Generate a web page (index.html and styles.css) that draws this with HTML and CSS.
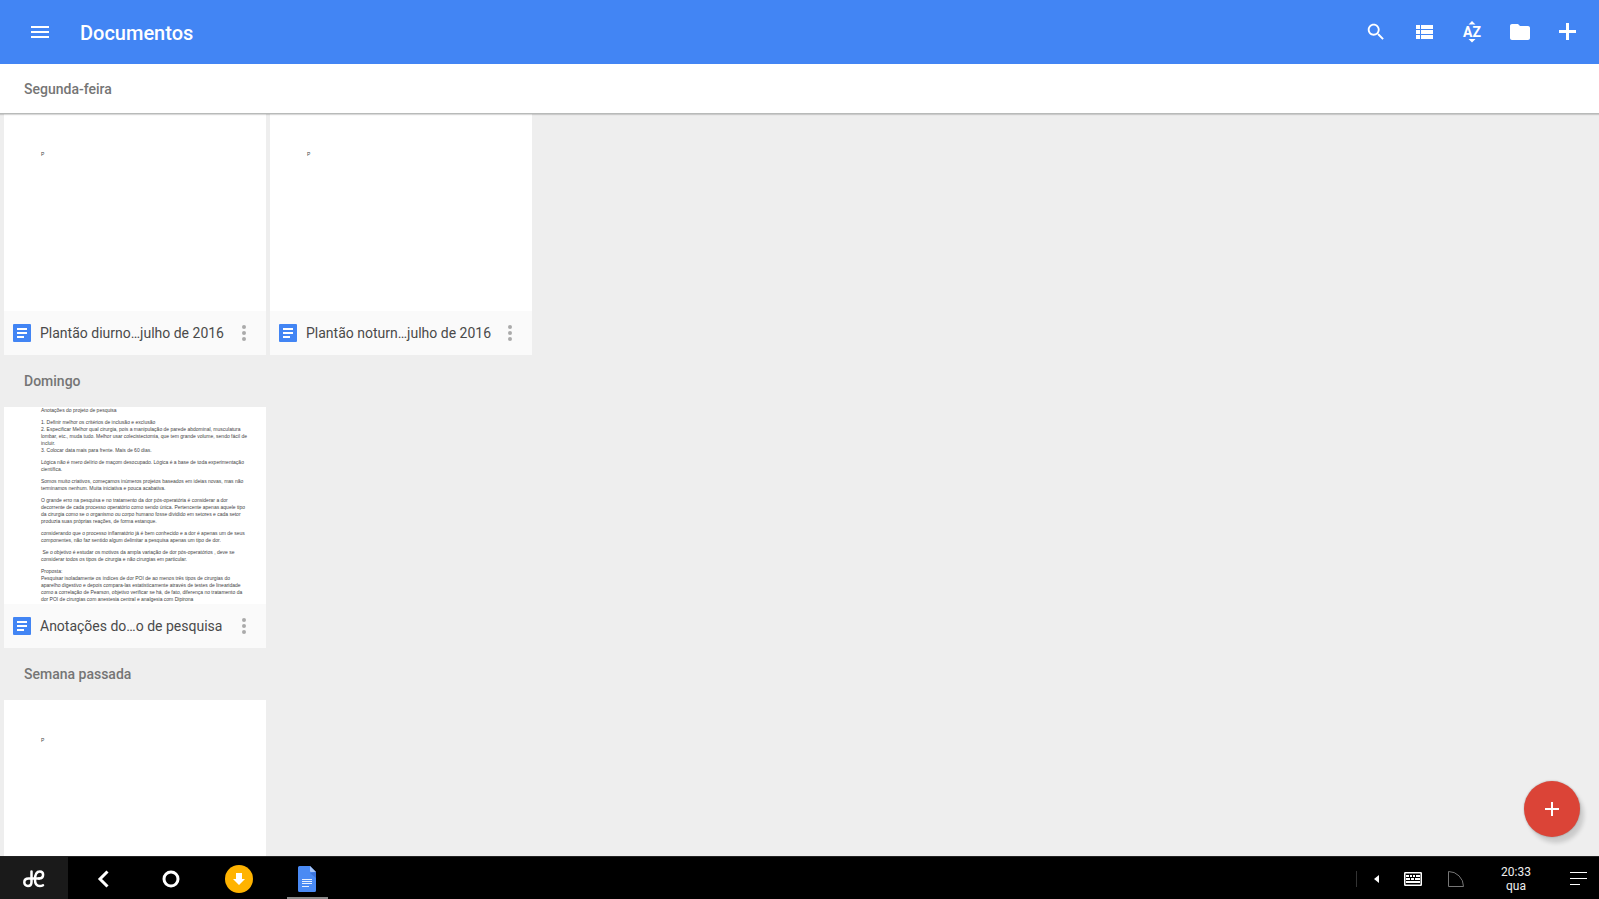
FILE: index.html
```html
<!DOCTYPE html>
<html lang="pt-BR">
<head>
    <meta charset="UTF-8">
    <title>Documentos</title>
    <meta name="viewport" content="width=device-width, initial-scale=1.0">
    <link rel="stylesheet" href="styles.css">
</head>
<body>

<svg class="sprite" aria-hidden="true">
    <symbol id="doc" viewBox="0 0 18 18">
        <rect width="18" height="18" rx="1" fill="#4285f4"/>
        <path d="M4 4h10v2H4zM4 8h10v2H4zM4 12h7v2H4z" fill="#fff"/>
    </symbol>
    <symbol id="more" viewBox="0 0 4 16">
        <circle cx="2" cy="2" r="2"/>
        <circle cx="2" cy="8" r="2"/>
        <circle cx="2" cy="14" r="2"/>
    </symbol>
</svg>

<div class="app">
    <header class="toolbar">
        <button class="icon-button" aria-label="Menu">
            <svg width="24" height="24" viewBox="0 0 24 24"><path d="M3 6h18v2H3zM3 11h18v2H3zM3 16h18v2H3z"/></svg>
        </button>
        <h1 class="toolbar-title">Documentos</h1>
        <button class="icon-button" aria-label="Pesquisar">
            <svg width="22" height="22" viewBox="0 0 24 24"><path d="M15.5 14h-.79l-.28-.27C15.41 12.59 16 11.11 16 9.5 16 5.91 13.09 3 9.5 3S3 5.91 3 9.5 5.91 16 9.5 16c1.61 0 3.09-.59 4.23-1.57l.27.28v.79l5 4.99L20.49 19l-4.99-5zm-6 0C7.01 14 5 11.99 5 9.5S7.01 5 9.5 5 14 7.01 14 9.5 11.99 14 9.5 14z"/></svg>
        </button>
        <button class="icon-button" aria-label="Exibir em lista">
            <svg width="24" height="24" viewBox="0 0 24 24"><path d="M4 5h4v4H4zM9 5h12v4H9zM4 10h4v4H4zM9 10h12v4H9zM4 15h4v4H4zM9 15h12v4H9z"/></svg>
        </button>
        <button class="icon-button" aria-label="Classificar">
            <svg width="24" height="24" viewBox="0 0 24 24">
                <path d="M12 1l3.500 3.500h-7zM8.500 19h7L12 22.500z"/>
                <text class="sort-letters" x="12" y="17" text-anchor="middle">AZ</text>
            </svg>
        </button>
        <button class="icon-button" aria-label="Abrir pasta">
            <svg width="24" height="24" viewBox="0 0 24 24"><path d="M10 4H4c-1.100 0-1.990.9-1.990 2L2 18c0 1.100.9 2 2 2h16c1.100 0 2-.9 2-2V8c0-1.100-.9-2-2-2h-8l-2-2z"/></svg>
        </button>
        <button class="icon-button" aria-label="Novo">
            <svg width="24" height="24" viewBox="0 0 24 24"><path d="M3 10h7V3h3v7h7v3h-7v7h-3v-7H3z"/></svg>
        </button>
    </header>

    <main class="content">
        <section>
            <h2 class="section-title current">Segunda-feira</h2>
            <div class="grid">
                <article class="card">
                    <div class="thumb"><p>P</p></div>
                    <div class="card-footer">
                        <svg class="doc-icon"><use href="#doc"/></svg>
                        <span class="name">Plantão diurno…julho de 2016</span>
                        <button class="more" aria-label="Mais opções"><svg><use href="#more"/></svg></button>
                    </div>
                </article>
                <article class="card">
                    <div class="thumb"><p>P</p></div>
                    <div class="card-footer">
                        <svg class="doc-icon"><use href="#doc"/></svg>
                        <span class="name">Plantão noturn…julho de 2016</span>
                        <button class="more" aria-label="Mais opções"><svg><use href="#more"/></svg></button>
                    </div>
                </article>
            </div>
        </section>

        <section>
            <h2 class="section-title">Domingo</h2>
            <div class="grid">
                <article class="card">
                    <div class="thumb full">
                        <p>Anotações do projeto de pesquisa</p>
                        <p>1. Definir melhor os critérios de inclusão e exclusão<br>
                        2. Especificar Melhor qual cirurgia, pois a manipulação de parede abdominal, musculatura<br>
                        lombar, etc., muda tudo. Melhor usar colecistectomia, que tem grande volume, sendo fácil de<br>
                        incluir.<br>
                        3. Colocar data mais para frente. Mais de 60 dias.</p>
                        <p>Lógica não é mero delírio de maçom desocupado. Lógica é a base de toda experimentação<br>
                        científica.</p>
                        <p>Somos muito criativos, começamos inúmeros projetos baseados em ideias novas, mas não<br>
                        terminamos nenhum. Muita iniciativa e pouca acabativa.</p>
                        <p>O grande erro na pesquisa e no tratamento da dor pós-operatória é considerar a dor<br>
                        decorrente de cada processo operatório como sendo única. Pertencente apenas aquele tipo<br>
                        da cirurgia como se o organismo ou corpo humano fosse dividido em setores e cada setor<br>
                        produzia suas próprias reações, de forma estanque.</p>
                        <p>considerando que o processo inflamatório já é bem conhecido e a dor é apenas um de seus<br>
                        componentes, não faz sentido algum delimitar a pesquisa apenas um tipo de dor.</p>
                        <p>&nbsp;Se o objetivo é estudar os motivos da ampla variação de dor pós-operatórios , deve se<br>
                        considerar todos os tipos de cirurgia e não cirurgias em particular.</p>
                        <p>Proposta:<br>
                        Pesquisar isoladamente os índices de dor POI de ao menos três tipos de cirurgias do<br>
                        aparelho digestivo e depois compara-las estatisticamente através de testes de linearidade<br>
                        como a correlação de Pearson, objetivo verificar se há, de fato, diferença no tratamento da<br>
                        dor POI de cirurgias com anestesia central e analgesia com Dipirona</p>
                    </div>
                    <div class="card-footer">
                        <svg class="doc-icon"><use href="#doc"/></svg>
                        <span class="name">Anotações do…o de pesquisa</span>
                        <button class="more" aria-label="Mais opções"><svg><use href="#more"/></svg></button>
                    </div>
                </article>
            </div>
        </section>

        <section>
            <h2 class="section-title">Semana passada</h2>
            <div class="grid">
                <article class="card">
                    <div class="thumb"><p>P</p></div>
                </article>
            </div>
        </section>
    </main>

    <button class="fab" aria-label="Criar documento">
        <svg width="14" height="14" viewBox="0 0 14 14"><path d="M6 0h2v6h6v2H8v6H6V8H0V6h6z"/></svg>
    </button>

    <nav class="taskbar">
        <button class="task start" aria-label="Iniciar">
            <svg width="22" height="18" viewBox="0 0 22 18" fill="none" stroke="#fff" stroke-width="2.500" stroke-linecap="round">
                <path d="M8.500 1.500v10.500c0 2.700-1.500 4-3.600 4S1.300 14.500 1.300 12.300 3 8.500 5.500 8.500H16"/>
                <path d="M20 15.200c-1 .7-2 .9-3.300.9-3.200 0-4.700-2.200-4.700-6.300 0-5.300 1.700-8.300 4.800-8.300 2 0 3.300 1.200 3.300 3.300 0 2.300-1.600 3.700-4.100 3.700"/>
            </svg>
        </button>
        <button class="task" aria-label="Voltar">
            <svg width="12" height="18" viewBox="0 0 12 18" fill="none" stroke="#fff" stroke-width="3"><path d="M10.500 1.500L3 9l7.500 7.500"/></svg>
        </button>
        <button class="task" aria-label="Início">
            <svg width="18" height="18" viewBox="0 0 18 18" fill="none" stroke="#fff" stroke-width="3"><circle cx="9" cy="9" r="7"/></svg>
        </button>
        <button class="task" aria-label="Downloads">
            <svg width="28" height="28" viewBox="0 0 28 28"><circle cx="14" cy="14" r="14" fill="#ffb300"/><path d="M11 8h6v6h3l-6 6-6-6h3z" fill="#fff"/></svg>
        </button>
        <button class="task active" aria-label="Documentos">
            <svg width="18" height="26" viewBox="0 0 18 26">
                <path d="M1.500 0H12l6 6v18.500a1.500 1.500 0 0 1-1.500 1.500h-15A1.500 1.500 0 0 1 0 24.500v-23A1.500 1.500 0 0 1 1.500 0z" fill="#4a8af4"/>
                <path d="M12 7l6 5V6z" fill="#3c74dc"/>
                <path d="M12 0l6 6h-5a1 1 0 0 1-1-1z" fill="#a6c5fa"/>
                <path d="M4 13h10v1H4zM4 15h10v1H4zM4 17h10v1H4zM4 20h7v1H4z" fill="#e8f0fe"/>
            </svg>
        </button>

        <div class="tray">
            <span class="divider"></span>
            <button class="tray-item arrow" aria-label="Mostrar mais">
                <svg width="5" height="8" viewBox="0 0 5 8"><path d="M5 0v8L0 4z" fill="#fff"/></svg>
            </button>
            <button class="tray-item keyboard" aria-label="Teclado">
                <svg width="18" height="14" viewBox="0 0 18 14">
                    <rect x=".75" y=".75" width="16.500" height="12.500" rx=".5" fill="none" stroke="#fff" stroke-width="1.500"/>
                    <path d="M2 3h3v2H2zM6 3h2v2H6zM9 3h2v2H9zM12 3h4v2h-4zM2 6h4v2H2zM7 6h3v2H7zM11 6h5v2h-5zM2 9h14v2H2z" fill="#fff"/>
                </svg>
            </button>
            <button class="tray-item signal" aria-label="Rede">
                <svg width="16" height="16" viewBox="0 0 16 16" fill="none" stroke="#777"><path d="M.5 15.500V.5a15 15 0 0 1 15 15z"/></svg>
            </button>
            <time class="clock">20:33<br>qua</time>
            <button class="tray-item notes" aria-label="Notificações">
                <svg width="17" height="13" viewBox="0 0 17 13" fill="#fff"><path d="M0 0h17v1H0zM0 6h17v1H0zM0 12h10v1H0z"/></svg>
            </button>
        </div>
    </nav>
</div>

</body>
</html>
```
FILE: styles.css
```css
html, body {
    height: 100%;
    margin: 0;
    padding: 0;
}

body {
    background-color: #eee;
    font-family: Roboto, sans-serif;
    overflow: hidden;
}

button {
    display: flex;
    align-items: center;
    justify-content: center;
    margin: 0;
    padding: 0;
    border: 0;
    background: none;
    cursor: pointer;
}

h1, h2, p {
    margin: 0;
}

.sprite {
    position: absolute;
    width: 0;
    height: 0;
}

.app {
    display: flex;
    flex-direction: column;
    height: 100%;
}

/* Toolbar */

.toolbar {
    flex: none;
    display: flex;
    align-items: center;
    height: 64px;
    padding: 0 7px 0 16px;
    background-color: #4285f4;
    color: #fff;
}

.toolbar-title {
    flex: 1;
    padding: 2px 0 0 16px;
    font-size: 20px;
    line-height: 24px;
    font-weight: 500;
}

.icon-button {
    width: 48px;
    height: 48px;
}

.icon-button svg {
    fill: #fff;
}

.sort-letters {
    font-family: Roboto, sans-serif;
    font-size: 14px;
    font-weight: 700;
}

/* Document list */

.content {
    flex: 1;
    min-height: 0;
    overflow: hidden;
}

.section-title {
    height: 52px;
    padding-left: 24px;
    color: #757575;
    font-size: 14px;
    line-height: 52px;
    font-weight: 500;
}

.section-title.current {
    position: relative;
    height: 49px;
    border-bottom: 1px solid #b8bab9;
    box-shadow: 0 1px 1px rgba(0, 0, 0, 0.15);
    background-color: #fff;
    line-height: 50px;
}

.grid {
    display: flex;
    flex-wrap: wrap;
    gap: 4px;
    padding: 0 4px;
}

.card {
    width: 262px;
    background-color: #fff;
}

.thumb {
    box-sizing: border-box;
    height: 197px;
    padding: 37px 0 0 37px;
    overflow: hidden;
    color: #444;
    font-family: "Liberation Sans", Arial, sans-serif;
    font-size: 5px;
    line-height: 7px;
    white-space: nowrap;
}

.thumb.full {
    padding-top: 0;
}

.thumb p + p {
    margin-top: 5px;
}

.card-footer {
    display: flex;
    align-items: center;
    height: 44px;
    padding-left: 9px;
    background-color: #fafafa;
}

.doc-icon {
    flex: none;
    width: 18px;
    height: 18px;
}

.name {
    flex: 1;
    min-width: 0;
    padding-left: 9px;
    color: #4a4a4a;
    font-size: 14px;
    white-space: nowrap;
}

.more {
    flex: none;
    width: 44px;
    height: 44px;
}

.more svg {
    width: 4px;
    height: 16px;
    fill: #aaa;
}

.fab {
    position: absolute;
    right: 19px;
    bottom: 62px;
    width: 56px;
    height: 56px;
    border-radius: 50%;
    background-color: #db4437;
    box-shadow: 4px 6px 4px rgba(0, 0, 0, 0.15), 0 0 2px rgba(0, 0, 0, 0.3);
}

.fab svg {
    fill: #fff;
}

/* System bar */

.taskbar {
    flex: none;
    display: flex;
    height: 42px;
    border-top: 1px solid #222;
    background-color: #000;
}

.task {
    width: 68px;
    padding-top: 1px;
}

.task.start {
    margin-right: 1px;
    background-color: #1a1a1a;
}

.task.active {
    background: linear-gradient(#8a8a8a, #8a8a8a) center bottom / 41px 2px no-repeat;
}

.tray {
    display: flex;
    align-items: center;
    margin-left: auto;
    padding: 1px 12px 0 0;
}

.divider {
    width: 1px;
    height: 16px;
    background-color: #333;
}

.tray-item {
    height: 41px;
}

.arrow {
    width: 39px;
}

.keyboard {
    width: 34px;
}

.signal {
    width: 52px;
}

.clock {
    width: 68px;
    color: #eee;
    font-size: 12px;
    line-height: 14px;
    text-align: center;
}

.notes {
    width: 17px;
    margin-left: 20px;
}
```
